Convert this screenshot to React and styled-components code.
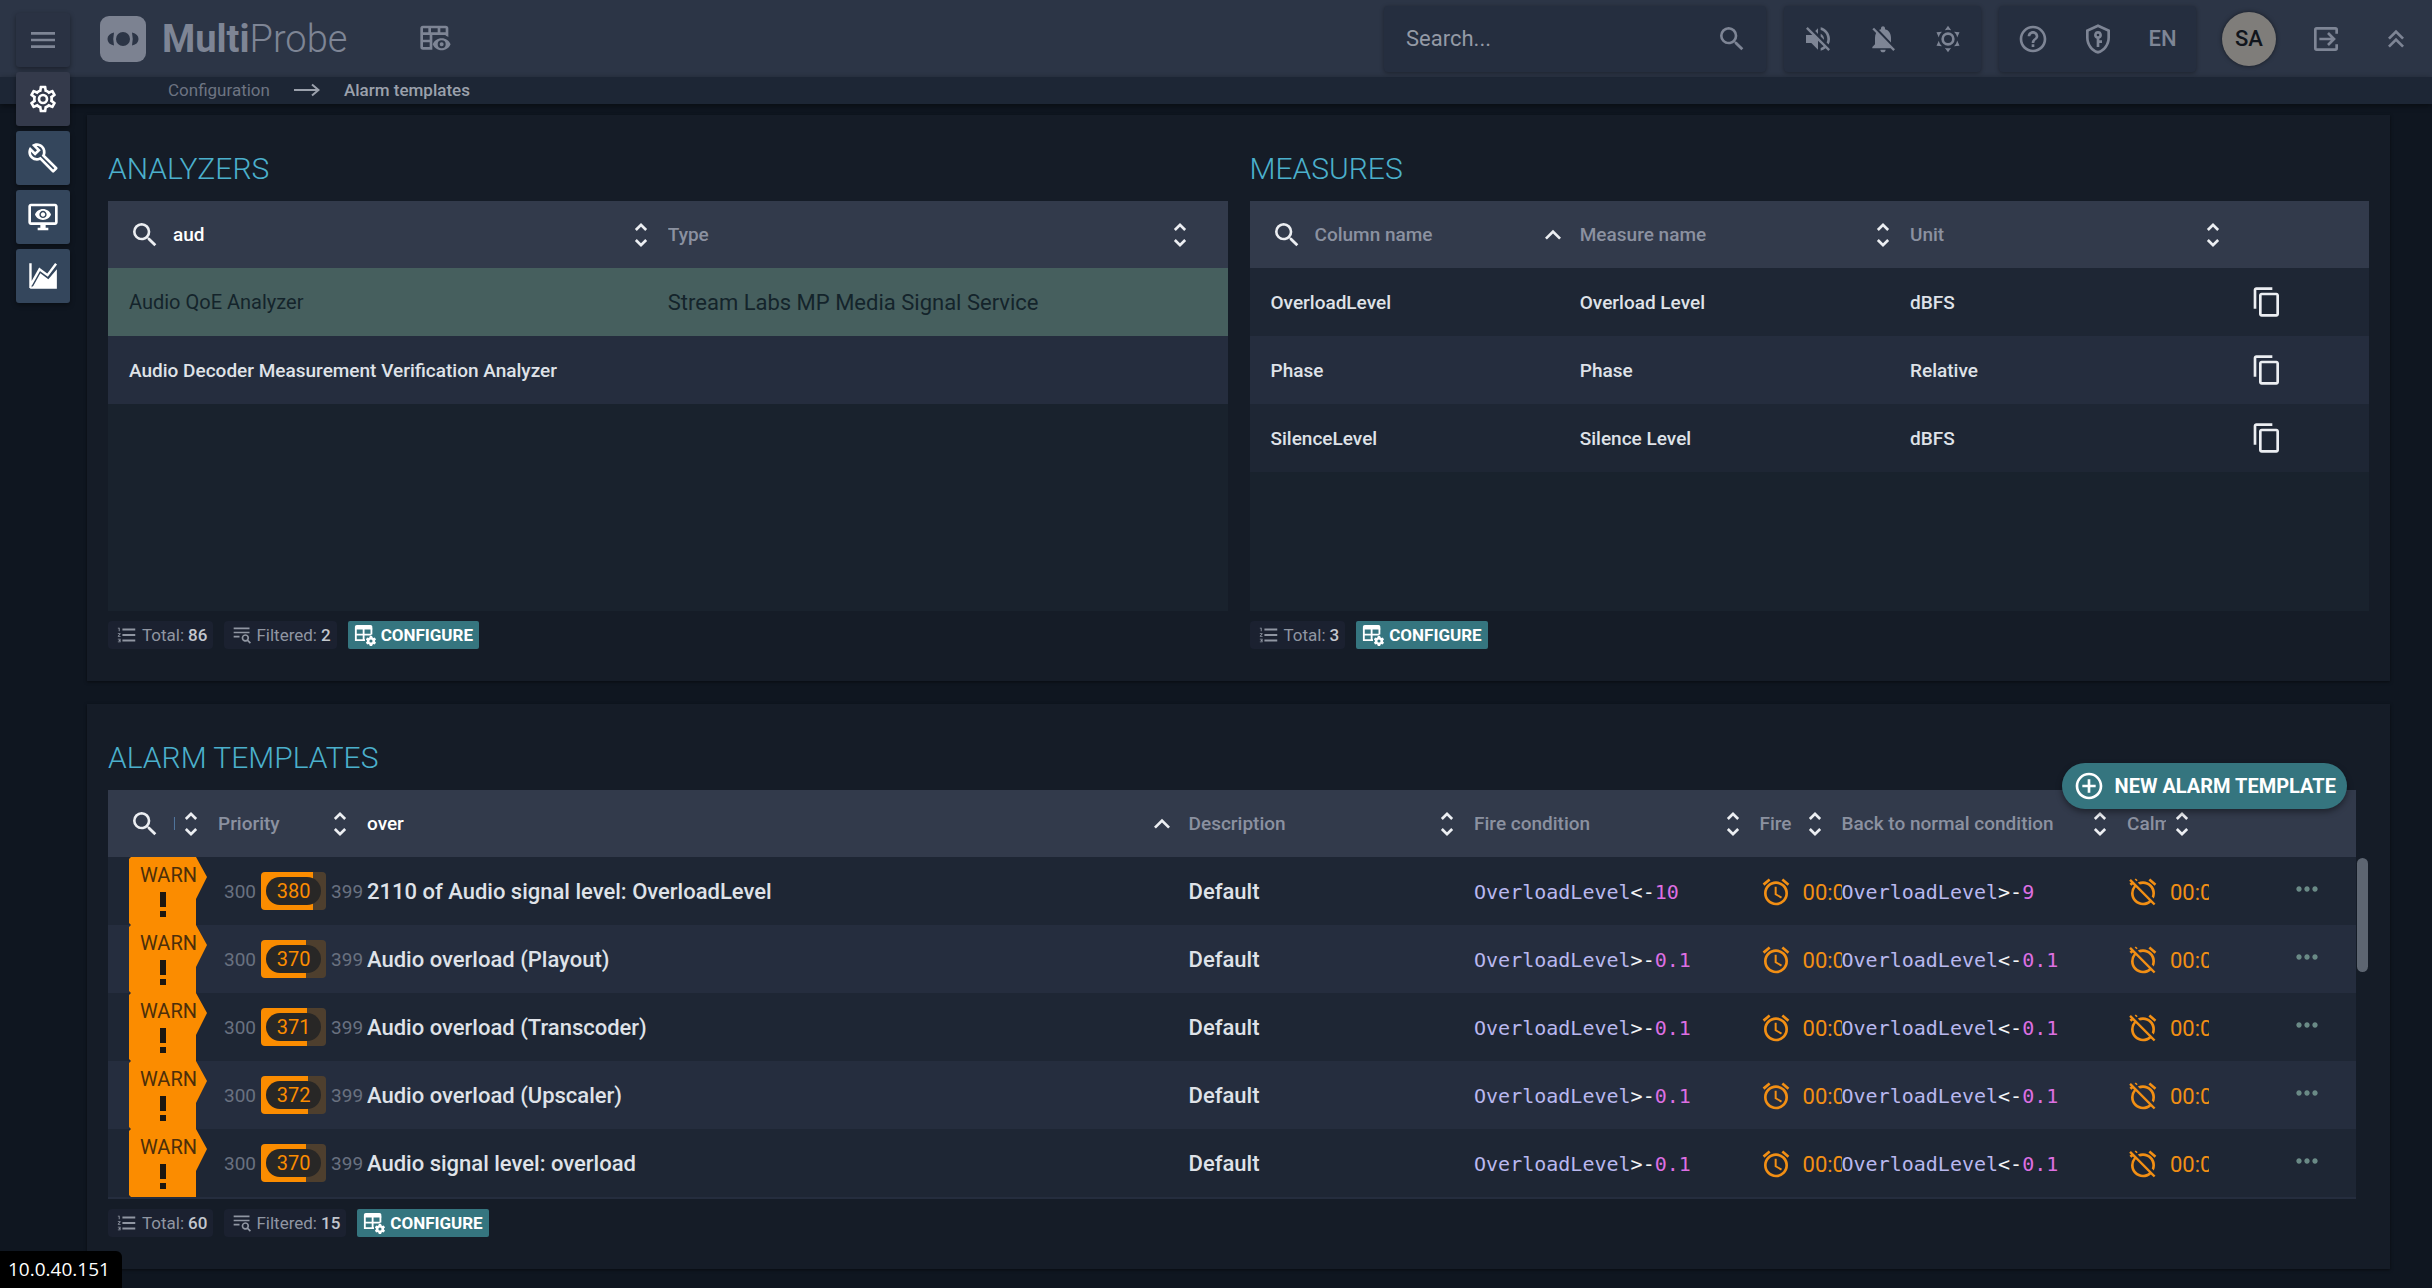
import React, { useState } from 'react'
import styled, { createGlobalStyle, css } from 'styled-components'
import {
  MdAddCircleOutline,
  MdAlarm,
  MdAlarmOff,
  MdContentCopy,
  MdFormatListNumbered,
  MdHelpOutline,
  MdKeyboardArrowUp,
  MdMenu,
  MdMoreHoriz,
  MdNotificationsOff,
  MdOutlineBuild,
  MdSearch,
  MdUnfoldMore,
  MdVolumeOff,
} from 'react-icons/md'

const colors = {
  page: '#0f1620',
  panel: '#151c27',
  header: '#2c3546',
  crumbs: '#1d2635',
  group: '#252e3f',
  tableHead: '#323a4b',
  tableBody: '#19222d',
  row: '#1e2634',
  rowAlt: '#252d3e',
  selected: '#465f5e',
  text: '#dfe2e8',
  muted: '#8b91a0',
  icon: '#7e8595',
  title: '#4bb0cc',
  accent: '#35757f',
  warn: '#fb8c00',
}

const GlobalStyle = createGlobalStyle`
  *, *::before, *::after {
    box-sizing: border-box;
  }
  body {
    margin: 0;
    min-height: 100vh;
    background: ${colors.page};
    color: ${colors.text};
    font-family: Roboto, 'Liberation Sans', sans-serif;
    font-size: 19px;
  }
  button, input {
    font: inherit;
    color: inherit;
    background: none;
    border: 0;
    padding: 0;
    outline: 0;
  }
  button {
    cursor: pointer;
  }
  svg {
    display: block;
    flex: none;
  }
`

// ---------- top bar ----------
const TopBar = styled.header`
  display: flex;
  align-items: center;
  height: 77px;
  padding: 0 4px 0 100px;
  background: ${colors.header};
  color: ${colors.icon};
`
const Brand = styled.a`
  display: flex;
  align-items: center;
  gap: 16px;
  margin-right: 72px;
  color: inherit;
  text-decoration: none;
  font-size: 38px;
  font-weight: 300;
  b {
    font-weight: 700;
  }
`
const Spacer = styled.div`
  flex: 1;
`
const BarGroup = styled.div`
  display: flex;
  align-items: center;
  height: 66px;
  margin-left: 18px;
  padding: 0 1px;
  border-radius: 4px;
  background: ${colors.group};
  box-shadow: 0 1px 4px rgba(0, 0, 0, 0.35);
`
const SearchBox = styled(BarGroup)`
  width: 382px;
  padding: 0 18px 0 22px;
  input {
    flex: 1;
    min-width: 0;
    font-size: 22px;
  }
  input::placeholder {
    color: #949aa6;
    opacity: 1;
  }
`
const BarButton = styled.button`
  display: flex;
  align-items: center;
  justify-content: center;
  width: 65px;
  height: 66px;
  font-size: 22px;
  font-weight: 500;
`
const Avatar = styled.button`
  width: 54px;
  height: 54px;
  margin: 0 17px 0 26px;
  border-radius: 50%;
  background: #7f7d7a;
  color: #11151c;
  font-size: 22px;
  font-weight: 500;
  box-shadow: 0 0 4px rgba(0, 0, 0, 0.5);
`
const CollapseButton = styled(BarButton)`
  margin-left: 5px;
`
const Crumbs = styled.nav`
  display: flex;
  align-items: center;
  gap: 24px;
  height: 27px;
  padding: 0 0 2px 168px;
  background: ${colors.crumbs};
  box-shadow: 0 2px 6px rgba(0, 0, 0, 0.45);
  color: #9ba1ac;
  font-size: 17px;
  line-height: 20px;
  a {
    color: #6d7482;
    text-decoration: none;
  }
  span {
    font-weight: 500;
  }
`

// ---------- side menu, floats over the header and the page ----------
const SideMenu = styled.nav`
  position: fixed;
  top: 13px;
  left: 16px;
  display: flex;
  flex-direction: column;
  gap: 5px;
`
const SideButton = styled.button`
  display: flex;
  align-items: center;
  justify-content: center;
  width: 54px;
  height: 54px;
  border-radius: 3px;
  background: ${props => props.$color};
  color: ${props => (props.$dim ? colors.icon : '#fff')};
  box-shadow: 0 2px 5px rgba(0, 0, 0, 0.4);
`

// ---------- panels ----------
const Page = styled.main`
  display: flex;
  flex-direction: column;
  gap: 23px;
  padding: 11px 42px 18px 87px;
`
const Panel = styled.section`
  position: relative;
  display: flex;
  gap: 22px;
  padding: 34px 21px 32px;
  background: ${colors.panel};
  box-shadow: 0 1px 3px rgba(0, 0, 0, 0.5);
`
const Block = styled.div`
  flex: 1;
  min-width: 0;
`
const Title = styled.h2`
  margin: 0 0 12px;
  color: ${colors.title};
  font-size: 30px;
  font-weight: 300;
  line-height: 40px;
  text-transform: uppercase;
`
const TableArea = styled.div`
  display: flex;
  align-items: flex-start;
  min-height: ${props => props.$minHeight || 0}px;
  background: ${props => (props.$plain ? 'none' : colors.tableBody)};
`
const ScrollTrack = styled.div`
  width: 13px;
  padding: 68px 1px 0;
  &::before {
    content: '';
    display: block;
    height: 114px;
    border-radius: 6px;
    background: #5d6571;
  }
`

// ---------- table ----------
const Table = styled.table`
  flex: 1;
  width: 100%;
  min-width: 0;
  table-layout: fixed;
  border-collapse: collapse;
  font-weight: 500;
  th {
    height: 67px;
    padding: 0 11px 0 0;
    background: ${colors.tableHead};
    text-align: left;
  }
  td {
    height: 68px;
    padding: 0;
    overflow: hidden;
    white-space: nowrap;
  }
  th:first-child,
  td:first-child {
    padding-left: 21px;
  }
  ${props => props.$inset && css`
    th:last-child {
      padding-right: 32px;
    }
  `}
  ${props => props.$cut && css`
    border-bottom: 2px solid ${colors.rowAlt};
  `}
`
const Row = styled.tr`
  background: ${colors.row};
  font-size: ${props => (props.$large ? 22 : 19)}px;
  &:nth-child(even) {
    background: ${colors.rowAlt};
  }
  ${props => props.$selected && css`
    background: ${colors.selected};
    color: #14242b;
    font-size: 20px;
    font-weight: 400;
  `}
`
const LargeCell = styled.td`
  font-size: 22px;
`
const HeadCell = styled.div`
  display: flex;
  align-items: center;
  label {
    margin-right: 12px;
    color: #eceef2;
  }
`
const FilterInput = styled.input`
  flex: 1;
  width: 0;
  min-width: 0;
  color: #fff;
  font-weight: 500;
  &::placeholder {
    color: ${colors.muted};
    opacity: 1;
  }
`
const IconButton = styled.button`
  display: inline-flex;
  vertical-align: middle;
  color: ${props => props.$color || '#eceef2'};
`
const CopyCell = styled.td`
  && {
    padding-left: 11px;
  }
`
const MoreCell = styled.td`
  && {
    padding-right: 33px;
    padding-bottom: 4px;
    text-align: right;
  }
`

const WarnBadge = styled.div`
  display: flex;
  flex-direction: column;
  align-items: center;
  width: 78px;
  height: 68px;
  padding: 8px 10px 8px 0;
  background: ${colors.warn};
  clip-path: polygon(2px 0, 67px 0, 78px 20px, 67px 42px, 67px 100%, 2px 100%, 0 calc(100% - 2px), 0 2px);
  color: #4d2f0a;
  font-size: 20px;
  font-weight: 400;
  line-height: 20px;
`
const WarnText = styled.span`
  align-self: flex-end;
`
const Priority = styled.div`
  display: flex;
  align-items: center;
  gap: 5px;
  padding-left: 6px;
  color: #697180;
  font-size: 19px;
  font-weight: 400;
`
const PriorityBar = styled.div`
  display: flex;
  align-items: center;
  width: 65px;
  height: 38px;
  padding: 0 5px;
  border-radius: 4px;
`
const PriorityValue = styled.span`
  width: 55px;
  border-radius: 14px;
  background: #282726;
  color: ${colors.warn};
  font-size: 20px;
  line-height: 28px;
  text-align: center;
`
const Condition = styled.code`
  color: #b9b8ef;
  font-family: 'DejaVu Sans Mono', monospace;
  font-size: 20px;
  font-weight: 400;
  i {
    color: #f4f5f7;
    font-style: normal;
  }
  em {
    color: #dd6fe2;
    font-style: normal;
  }
`
const Timer = styled.div`
  display: flex;
  align-items: center;
  gap: 11px;
  padding-top: 2px;
  color: #f28f14;
  font-size: 22px;
  font-weight: 400;
`

// ---------- footer under a table ----------
const Footer = styled.footer`
  display: flex;
  gap: 11px;
  margin-top: 10px;
  font-size: 17px;
  line-height: 28px;
`
const Chip = styled.div`
  display: flex;
  align-items: center;
  gap: 4px;
  padding: 0 6px 0 8px;
  border-radius: 4px;
  background: #1b2130;
  color: #9096a2;
  b {
    color: #c3c7ce;
    font-weight: 500;
  }
`
const ConfigureButton = styled.button`
  display: flex;
  align-items: center;
  gap: 5px;
  padding: 0 6px;
  border-radius: 2px;
  background: ${colors.accent};
  color: #fff;
  font-weight: 700;
  line-height: 28px;
`
const NewButton = styled.button`
  position: absolute;
  top: 59px;
  right: 43px;
  display: flex;
  align-items: center;
  gap: 10px;
  height: 46px;
  padding: 0 11px;
  border-radius: 23px;
  background: ${colors.accent};
  color: #fff;
  font-size: 20px;
  font-weight: 700;
  box-shadow: 0 3px 6px rgba(0, 0, 0, 0.4);
`
const StatusTip = styled.div`
  position: fixed;
  bottom: 0;
  left: 0;
  padding: 0 12px 0 8px;
  border-top-right-radius: 6px;
  background: #000;
  color: #fff;
  font-family: 'Open Sans', sans-serif;
  font-size: 19px;
  line-height: 37px;
`

// ---------- drawings ----------
const Glyph = ({ d, size = 32 }) => (
  <svg width={size} height={size} viewBox="0 0 24 24" fill="currentColor" aria-hidden="true">
    <path fillRule="evenodd" d={d} />
  </svg>
)

const paths = {
  cog: 'M12,8A4,4 0 0,1 16,12A4,4 0 0,1 12,16A4,4 0 0,1 8,12A4,4 0 0,1 12,8M12,10A2,2 0 0,0 10,12A2,2 0 0,0 12,14A2,2 0 0,0 14,12A2,2 0 0,0 12,10M10,22C9.75,22 9.54,21.82 9.5,21.58L9.13,18.93C8.5,18.68 7.96,18.34 7.44,17.94L4.95,18.95C4.73,19.03 4.46,18.95 4.34,18.73L2.34,15.27C2.21,15.05 2.27,14.78 2.46,14.63L4.57,12.97L4.5,12L4.57,11L2.46,9.37C2.27,9.22 2.21,8.95 2.34,8.73L4.34,5.27C4.46,5.05 4.73,4.96 4.95,5.05L7.44,6.05C7.96,5.66 8.5,5.32 9.13,5.07L9.5,2.42C9.54,2.18 9.75,2 10,2H14C14.25,2 14.46,2.18 14.5,2.42L14.87,5.07C15.5,5.32 16.04,5.66 16.56,6.05L19.05,5.05C19.27,4.96 19.54,5.05 19.66,5.27L21.66,8.73C21.79,8.95 21.73,9.22 21.54,9.37L19.43,11L19.5,12L19.43,13L21.54,14.63C21.73,14.78 21.79,15.05 21.66,15.27L19.66,18.73C19.54,18.95 19.27,19.04 19.05,18.95L16.56,17.95C16.04,18.34 15.5,18.68 14.87,18.93L14.5,21.58C14.46,21.82 14.25,22 14,22H10M11.25,4L10.88,6.61C9.68,6.86 8.62,7.5 7.85,8.39L5.44,7.35L4.69,8.65L6.8,10.2C6.4,11.37 6.4,12.64 6.8,13.8L4.68,15.36L5.43,16.66L7.86,15.62C8.63,16.5 9.68,17.14 10.87,17.38L11.24,20H12.76L13.13,17.39C14.32,17.14 15.37,16.5 16.14,15.62L18.57,16.66L19.32,15.36L17.2,13.81C17.6,12.64 17.6,11.37 17.2,10.2L19.31,8.65L18.56,7.35L16.15,8.39C15.38,7.5 14.32,6.86 13.12,6.62L12.75,4H11.25Z',
  monitorEye: 'M3 4V16H21V4H3M3 2H21C22.1 2 23 2.89 23 4V16C23 16.53 22.79 17.04 22.41 17.41C22.04 17.79 21.53 18 21 18H14V20H16V22H8V20H10V18H3C2.47 18 1.96 17.79 1.59 17.41C1.21 17.04 1 16.53 1 16V4C1 2.89 1.89 2 3 2M10.84 8.93C11.15 8.63 11.57 8.45 12 8.45C12.43 8.46 12.85 8.63 13.16 8.94C13.46 9.24 13.64 9.66 13.64 10.09C13.64 10.53 13.46 10.94 13.16 11.25C12.85 11.56 12.43 11.73 12 11.73C11.57 11.73 11.15 11.55 10.84 11.25C10.54 10.94 10.36 10.53 10.36 10.09C10.36 9.66 10.54 9.24 10.84 8.93M10.07 12C10.58 12.53 11.28 12.82 12 12.82C12.72 12.82 13.42 12.53 13.93 12C14.44 11.5 14.73 10.81 14.73 10.09C14.73 9.37 14.44 8.67 13.93 8.16C13.42 7.65 12.72 7.36 12 7.36C11.28 7.36 10.58 7.65 10.07 8.16C9.56 8.67 9.27 9.37 9.27 10.09C9.27 10.81 9.56 11.5 10.07 12M6 10.09C6.94 7.7 9.27 6 12 6C14.73 6 17.06 7.7 18 10.09C17.06 12.5 14.73 14.18 12 14.18C9.27 14.18 6.94 12.5 6 10.09Z',
  sunny: 'M12,7A5,5 0 0,1 17,12A5,5 0 0,1 12,17A5,5 0 0,1 7,12A5,5 0 0,1 12,7M12,9A3,3 0 0,0 9,12A3,3 0 0,0 12,15A3,3 0 0,0 15,12A3,3 0 0,0 12,9M12,2L14.39,5.42C13.65,5.15 12.84,5 12,5C11.16,5 10.35,5.15 9.61,5.42L12,2M3.34,7L7.5,6.65C6.9,7.16 6.36,7.78 5.94,8.5C5.5,9.24 5.25,10 5.11,10.79L3.34,7M3.36,17L5.12,13.23C5.26,14 5.53,14.78 5.95,15.5C6.37,16.24 6.91,16.86 7.5,17.37L3.36,17M20.65,7L18.88,10.79C18.74,10 18.47,9.23 18.05,8.5C17.63,7.78 17.1,7.15 16.5,6.64L20.65,7M20.64,17L16.5,17.36C17.09,16.85 17.62,16.22 18.04,15.5C18.46,14.77 18.73,14 18.87,13.21L20.64,17M12,22L9.59,18.56C10.33,18.83 11.14,19 12,19C12.82,19 13.63,18.83 14.37,18.56L12,22Z',
  doubleUp: 'M7.41,18.41L6,17L12,11L18,17L16.59,18.41L12,13.83L7.41,18.41M7.41,12.41L6,11L12,5L18,11L16.59,12.41L12,7.83L7.41,12.41Z',
  textSearch: 'M2,3H21V5H2V3M2,8H21V10H2V8M2,13H9V15H2V13M16,11A4.5,4.5 0 0,1 19.8,17.9L22.8,21L21.4,22.4L18.3,19.4A4.5,4.5 0 1,1 16,11M16,13A2.5,2.5 0 0,0 16,18A2.5,2.5 0 0,0 16,13Z',
  smallCog: 'M17.2,13H19.8L20.1,14.5L21.3,15.2L22.7,14.7L24,16.9L22.9,17.9V19.1L24,20.1L22.7,22.3L21.3,21.8L20.1,22.5L19.8,24H17.2L16.9,22.5L15.7,21.8L14.3,22.3L13,20.1L14.1,19.1V17.9L13,16.9L14.3,14.7L15.7,15.2L16.9,14.5L17.2,13M18.5,16.8A1.7,1.7 0 0,0 18.5,20.2A1.7,1.7 0 0,0 18.5,16.8Z',
  tableEye: 'M3,2H20A2,2 0 0,1 22,4V10.5A9,9 0 0,0 20,9.6V9H10V20H3A2,2 0 0,1 1,18V4A2,2 0 0,1 3,2M3,4V7H7V4H3M9,4V7H14V4H9M16,4V7H20V4H16M3,9V12.5H8V9H3M3,14.5V18H8V14.5H3M17,11.5C20.2,11.5 22.6,13.3 23.7,16C22.6,18.7 20.2,20.5 17,20.5C13.8,20.5 11.4,18.7 10.3,16C11.4,13.3 13.8,11.5 17,11.5M17,13A3,3 0 0,0 17,19A3,3 0 0,0 17,13M17,14.5A1.5,1.5 0 0,1 17,17.5A1.5,1.5 0 0,1 17,14.5Z',
  shieldKey: 'M12,1L3,5V11C3,16.55 6.84,21.74 12,23C17.16,21.74 21,16.55 21,11V5L12,1M12,3.2L19,6.3V11C19,15.5 16,19.7 12,20.9C8,19.7 5,15.5 5,11V6.3L12,3.2M12,6A3,3 0 0,1 13,11.8V13H15V15H13V18H11V11.8A3,3 0 0,1 12,6M12,8A1,1 0 0,0 12,10A1,1 0 0,0 12,8Z',
}

const TableCogIcon = () => (
  <svg width="22" height="22" viewBox="0 0 24 24" fill="currentColor" aria-hidden="true">
    <path d="M3 1H18Q20 1 20 3V6H1V3Q1 1 3 1Z" />
    <path fill="none" stroke="currentColor" strokeWidth="2" d="M2 5V17.500H12M2 11.500H19M10.500 5V17.500M19 5V11.500" />
    <path fillRule="evenodd" d={paths.smallCog} />
  </svg>
)

const ExitIcon = () => (
  <svg width="32" height="32" viewBox="0 0 24 24" fill="none" stroke="currentColor" strokeWidth="2" aria-hidden="true">
    <path d="M20 8V5Q20 4 19 4H5Q4 4 4 5V19Q4 20 5 20H19Q20 20 20 19V16M7 12H18M13.500 7.500L18 12L13.500 16.500" />
  </svg>
)

const ChartIcon = () => (
  <svg width="32" height="32" viewBox="0 0 24 24" aria-hidden="true">
    <path fill="none" stroke="currentColor" strokeWidth="1.8" d="M2.6 2.4V21M3 18.5L9.4 7L15.4 11.4L21.8 2.8" />
    <path fill="currentColor" d="M2 21.6L4.8 19.4L10 10L16 14.5L22.4 7V21.6Z" />
  </svg>
)

const LogoIcon = () => (
  <svg width="46" height="46" viewBox="0 0 46 46" aria-hidden="true">
    <rect width="46" height="46" rx="9" fill="#7c8291" />
    <g fill={colors.header}>
      <circle cx="23" cy="23" r="7" />
      <path d="M14 16.500Q7.500 18 7.500 23T14 29.500Q12.500 23 14 16.500Z" />
      <path d="M32 16.500Q38.500 18 38.500 23T32 29.500Q33.500 23 32 16.500Z" />
    </g>
  </svg>
)

const LongArrow = () => (
  <svg width="26" height="14" viewBox="0 0 26 14" fill="none" stroke="currentColor" strokeWidth="2" aria-hidden="true">
    <path d="M0 7H24M18 1.500L24.500 7L18 12.500" />
  </svg>
)

const Bang = () => (
  <svg width="6" height="25" viewBox="0 0 6 25" fill="#1d1710" aria-hidden="true">
    <path d="M0 0H6V15H0ZM0 19H6V25H0Z" />
  </svg>
)

// ---------- data ----------
const measures = [
  { column: 'OverloadLevel', name: 'Overload Level', unit: 'dBFS' },
  { column: 'Phase', name: 'Phase', unit: 'Relative' },
  { column: 'SilenceLevel', name: 'Silence Level', unit: 'dBFS' },
]

const alarms = [
  { value: 380, name: '2110 of Audio signal level: OverloadLevel', fire: ['<', '10'], back: ['>', '9'] },
  { value: 370, name: 'Audio overload (Playout)', fire: ['>', '0.1'], back: ['<', '0.1'] },
  { value: 371, name: 'Audio overload (Transcoder)', fire: ['>', '0.1'], back: ['<', '0.1'] },
  { value: 372, name: 'Audio overload (Upscaler)', fire: ['>', '0.1'], back: ['<', '0.1'] },
  { value: 370, name: 'Audio signal level: overload', fire: ['>', '0.1'], back: ['<', '0.1'] },
]

const ColumnHead = ({ id, label, search, sorted, initial = '' }) => {
  const [value, setValue] = useState(initial)
  return (
    <th scope="col">
      <HeadCell>
        {search && <label htmlFor={id}><MdSearch size={32} /></label>}
        <FilterInput
          id={id}
          aria-label={label}
          placeholder={label}
          value={value}
          onChange={e => setValue(e.target.value)}
        />
        <IconButton aria-label={`Sort by ${label}`}>
          {sorted ? <MdKeyboardArrowUp size={32} /> : <MdUnfoldMore size={32} />}
        </IconButton>
      </HeadCell>
    </th>
  )
}

const TableFooter = ({ total, filtered }) => (
  <Footer>
    <Chip><MdFormatListNumbered size={22} />Total: <b>{total}</b></Chip>
    {filtered && <Chip><Glyph d={paths.textSearch} size={20} />Filtered: <b>{filtered}</b></Chip>}
    <ConfigureButton><TableCogIcon />CONFIGURE</ConfigureButton>
  </Footer>
)

const Expression = ({ parts }) => (
  <Condition>OverloadLevel<i>{parts[0]}-</i><em>{parts[1]}</em></Condition>
)

const PriorityScale = ({ value }) => {
  const fill = value - 300
  return (
    <Priority>
      300
      <PriorityBar
        style={{ background: `linear-gradient(to right, ${colors.warn} ${fill}%, #4e3f2e ${fill}%)` }}
      >
        <PriorityValue>{value}</PriorityValue>
      </PriorityBar>
      399
    </Priority>
  )
}

const Analyzers = () => (
  <Block>
    <Title>Analyzers</Title>
    <TableArea $minHeight={410}>
      <Table $inset>
        <colgroup>
          <col width="50%" />
          <col width="50%" />
        </colgroup>
        <thead>
          <tr>
            <ColumnHead id="analyzer-name" label="Name" search initial="aud" />
            <ColumnHead id="analyzer-type" label="Type" />
          </tr>
        </thead>
        <tbody>
          <Row $selected>
            <td>Audio QoE Analyzer</td>
            <LargeCell>Stream Labs MP Media Signal Service</LargeCell>
          </Row>
          <Row>
            <td>Audio Decoder Measurement Verification Analyzer</td>
            <LargeCell />
          </Row>
        </tbody>
      </Table>
    </TableArea>
    <TableFooter total={86} filtered={2} />
  </Block>
)

const Measures = () => (
  <Block>
    <Title>Measures</Title>
    <TableArea $minHeight={410}>
      <Table>
        <colgroup>
          <col width="29.5%" />
          <col width="29.5%" />
          <col width="29.5%" />
          <col />
        </colgroup>
        <thead>
          <tr>
            <ColumnHead id="measure-column" label="Column name" search sorted />
            <ColumnHead id="measure-name" label="Measure name" />
            <ColumnHead id="measure-unit" label="Unit" />
            <th />
          </tr>
        </thead>
        <tbody>
          {measures.map(item => (
            <Row key={item.column}>
              <td>{item.column}</td>
              <td>{item.name}</td>
              <td>{item.unit}</td>
              <CopyCell>
                <IconButton aria-label={`Copy ${item.column}`}><MdContentCopy size={32} /></IconButton>
              </CopyCell>
            </Row>
          ))}
        </tbody>
      </Table>
    </TableArea>
    <TableFooter total={3} />
  </Block>
)

const AlarmTemplates = () => (
  <Block>
    <Title>Alarm templates</Title>
    <TableArea $plain>
      <Table $cut>
        <colgroup>
          <col width="110" />
          <col width="149" />
          <col />
          <col width="12.7%" />
          <col width="12.7%" />
          <col width="82" />
          <col width="12.7%" />
          <col width="82" />
          <col width="147" />
        </colgroup>
        <thead>
          <tr>
            <ColumnHead id="alarm-level" label="Level" search />
            <ColumnHead id="alarm-priority" label="Priority" />
            <ColumnHead id="alarm-name" label="Name" sorted initial="over" />
            <ColumnHead id="alarm-description" label="Description" />
            <ColumnHead id="alarm-fire" label="Fire condition" />
            <ColumnHead id="alarm-fire-time" label="Fire" />
            <ColumnHead id="alarm-back" label="Back to normal condition" />
            <ColumnHead id="alarm-calm" label="Calm" />
            <th />
          </tr>
        </thead>
        <tbody>
          {alarms.map(item => (
            <Row key={item.name} $large>
              <td>
                <WarnBadge>
                  <WarnText>WARN</WarnText>
                  <Spacer />
                  <Bang />
                </WarnBadge>
              </td>
              <td><PriorityScale value={item.value} /></td>
              <td>{item.name}</td>
              <td>Default</td>
              <td><Expression parts={item.fire} /></td>
              <td><Timer><MdAlarm size={32} />00:00</Timer></td>
              <td><Expression parts={item.back} /></td>
              <td><Timer><MdAlarmOff size={32} />00:00</Timer></td>
              <MoreCell>
                <IconButton $color="#6a8a86" aria-label="More"><MdMoreHoriz size={32} /></IconButton>
              </MoreCell>
            </Row>
          ))}
        </tbody>
      </Table>
      <ScrollTrack />
    </TableArea>
    <TableFooter total={60} filtered={15} />
  </Block>
)

const Header = () => (
  <>
    <TopBar>
      <Brand href="#">
        <LogoIcon />
        <span><b>Multi</b>Probe</span>
      </Brand>
      <IconButton $color={colors.icon} aria-label="Table view"><Glyph d={paths.tableEye} /></IconButton>
      <Spacer />
      <SearchBox>
        <input id="search" aria-label="Search" placeholder="Search..." />
        <label htmlFor="search"><MdSearch size={32} /></label>
      </SearchBox>
      <BarGroup>
        <BarButton aria-label="Sound"><MdVolumeOff size={32} /></BarButton>
        <BarButton aria-label="Notifications"><MdNotificationsOff size={32} /></BarButton>
        <BarButton aria-label="Theme"><Glyph d={paths.sunny} /></BarButton>
      </BarGroup>
      <BarGroup>
        <BarButton aria-label="Help"><MdHelpOutline size={32} /></BarButton>
        <BarButton aria-label="Access"><Glyph d={paths.shieldKey} /></BarButton>
        <BarButton>EN</BarButton>
      </BarGroup>
      <Avatar>SA</Avatar>
      <BarButton aria-label="Log out"><ExitIcon /></BarButton>
      <CollapseButton aria-label="Collapse"><Glyph d={paths.doubleUp} /></CollapseButton>
    </TopBar>
    <Crumbs>
      <a href="#">Configuration</a>
      <LongArrow />
      <span>Alarm templates</span>
    </Crumbs>
  </>
)

export default function App() {
  return (
    <>
      <GlobalStyle />
      <Header />
      <Page>
        <Panel>
          <Analyzers />
          <Measures />
        </Panel>
        <Panel>
          <AlarmTemplates />
          <NewButton><MdAddCircleOutline size={32} />NEW ALARM TEMPLATE</NewButton>
        </Panel>
      </Page>
      <SideMenu>
        <SideButton $color="#2a3243" $dim aria-label="Menu"><MdMenu size={32} /></SideButton>
        <SideButton $color="#343a4b" aria-label="Settings"><Glyph d={paths.cog} /></SideButton>
        <SideButton $color="#34465c" aria-label="Tools"><MdOutlineBuild size={32} /></SideButton>
        <SideButton $color="#34465c" aria-label="Monitoring"><Glyph d={paths.monitorEye} /></SideButton>
        <SideButton $color="#34465c" aria-label="Charts"><ChartIcon /></SideButton>
      </SideMenu>
      <StatusTip>10.0.40.151</StatusTip>
    </>
  )
}
